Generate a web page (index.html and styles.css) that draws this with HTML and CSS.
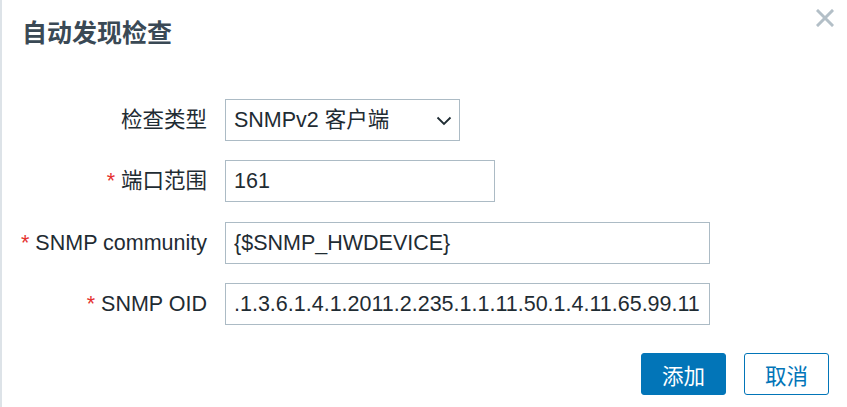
FILE: index.html
```html
<!DOCTYPE html>
<html lang="zh-CN">
<head>
<meta charset="utf-8">
<title>自动发现检查</title>
<link rel="stylesheet" href="styles.css">
</head>
<body>
<div class="dialog">
  <div class="header">
    <h1 class="title">自动发现检查</h1>
    <button class="close" aria-label="关闭">
      <svg width="18" height="18" viewBox="0 0 18 18"><path d="M2 2 L16 16 M16 2 L2 16" stroke="#b3bfc7" stroke-width="3" stroke-linecap="square"/></svg>
    </button>
  </div>
  <form class="form">
    <label class="label">检查类型</label>
    <div class="field select w-235">
      <span>SNMPv2 客户端</span>
      <svg class="chev" width="16" height="10" viewBox="0 0 16 10"><polyline points="1.5,1.5 8,8 14.5,1.5" fill="none" stroke="#1f2c33" stroke-width="1.8"/></svg>
    </div>

    <label class="label"><span class="req">*</span> 端口范围</label>
    <div class="field w-270">161</div>

    <label class="label"><span class="req">*</span> SNMP community</label>
    <div class="field w-485">{$SNMP_HWDEVICE}</div>

    <label class="label"><span class="req">*</span> SNMP OID</label>
    <div class="field w-485">.1.3.6.1.4.1.2011.2.235.1.1.11.50.1.4.11.65.99.11</div>
  </form>
  <div class="actions">
    <button class="btn primary">添加</button>
    <button class="btn secondary">取消</button>
  </div>
</div>
</body>
</html>
```

FILE: styles.css
```css
html, body {
  margin: 0;
  padding: 0;
  background: #ffffff;
}
body {
  width: 847px;
  height: 407px;
  overflow: hidden;
  font-family: "Liberation Sans", "Noto Sans CJK SC", sans-serif;
  color: #1f2c33;
}
.dialog {
  box-sizing: border-box;
  height: 407px;
  border-left: 2px solid #dde3e8;
}
.header {
  display: flex;
  justify-content: space-between;
  align-items: flex-start;
  padding: 16px 13px 0 20px;
}
.title {
  margin: 0;
  font-family: "Noto Sans CJK SC", sans-serif;
  font-size: 25px;
  line-height: 31px;
  font-weight: 700;
  color: #3a4955;
}
.close {
  margin-top: -7px;
  padding: 0;
  border: 0;
  background: none;
  width: 18px;
  height: 18px;
  display: flex;
}
.form {
  display: grid;
  grid-template-columns: 205px 1fr;
  column-gap: 18px;
  row-gap: 19.4px;
  margin-top: 52px;
  align-items: center;
}
.label {
  text-align: right;
  font-size: 21.5px;
  line-height: 42px;
  white-space: nowrap;
}
.req {
  color: #e5322f;
}
.field {
  box-sizing: border-box;
  height: 42px;
  border: 1px solid #acbbc5;
  padding: 0 8px;
  font-size: 21.5px;
  line-height: 40px;
  white-space: nowrap;
  overflow: hidden;
}
.select {
  display: flex;
  justify-content: space-between;
  align-items: center;
  padding-right: 7px;
}
.chev {
  display: block;
  margin-top: 1px;
}
.w-235 { width: 235px; }
.w-270 { width: 270px; }
.w-485 { width: 485px; }
.actions {
  display: flex;
  justify-content: flex-end;
  gap: 18px;
  padding-right: 18px;
  margin-top: 28px;
}
.btn {
  box-sizing: border-box;
  width: 85px;
  height: 42px;
  border-radius: 3px;
  font-family: "Noto Sans CJK SC", sans-serif;
  font-size: 21.5px;
  padding: 0;
  cursor: pointer;
}
.primary {
  background: #0275b8;
  border: 1px solid #0275b8;
  color: #ffffff;
}
.secondary {
  background: #ffffff;
  border: 1px solid #0275b8;
  color: #0275b8;
}
```
